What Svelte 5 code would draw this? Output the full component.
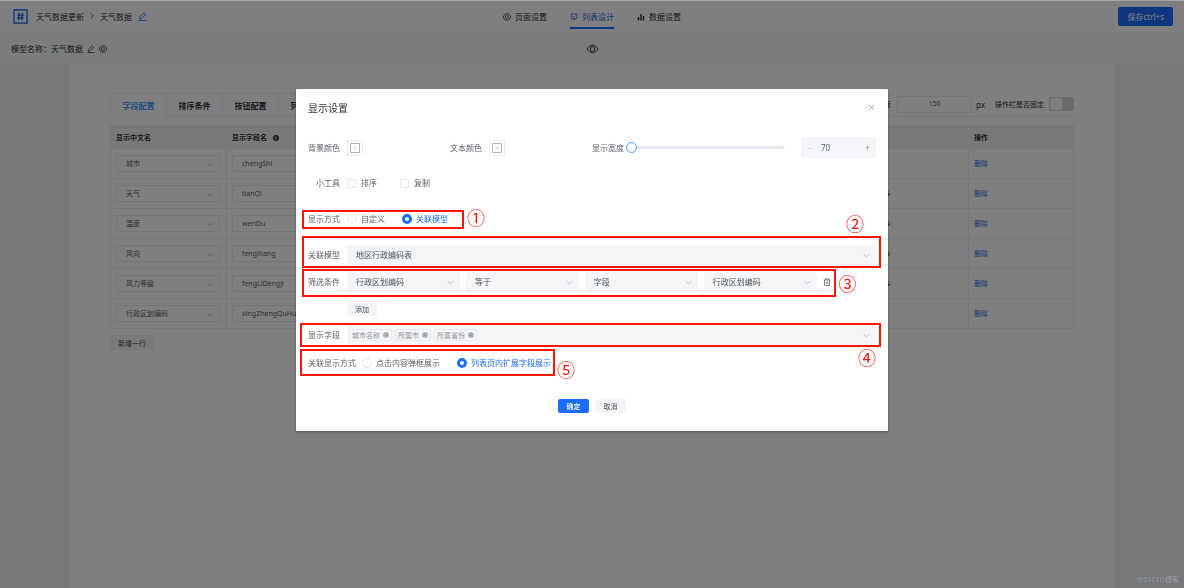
<script>
  const fields = [
    ['城市', 'chengShi'],
    ['天气', 'tianQi'],
    ['温度', 'wenDu'],
    ['风向', 'fengXiang'],
    ['风力等级', 'fengLiDengJi'],
    ['行政区划编码', 'xingZhengQuHuaBianMa']
  ];
  const tabs = ['字段配置', '排序条件', '按钮配置', '列表配置'];
  const filters = ['行政区划编码', '等于', '字段', '行政区划编码'];

  let tags = $state(['城市名称', '所属市', '所属省份']);
  let activeTab = $state('字段配置');
  let mode = $state('model');
  let expand = $state('list');
  let width = $state(70);
</script>

{#snippet gear()}
  <svg class="icon" viewBox="0 0 16 16" aria-hidden="true">
    <path d="M5 1.5h6l1 1.8 2 1.2L15.2 8 14 11.500l-2 1.200-1 1.800H5l-1-1.800-2-1.200L.8 8 2 4.500l2-1.200z" />
    <circle cx="8" cy="8" r="3" />
  </svg>
{/snippet}

{#snippet pencil()}
  <svg class="icon" viewBox="0 0 16 16" aria-hidden="true">
    <path d="M2.500 12.500 3 9l7.500-7.500 3 3L6 12zM1 15h14" />
  </svg>
{/snippet}

{#snippet chevron()}
  <svg class="chevron" viewBox="0 0 10 10" aria-hidden="true"><path d="M1 3l4 4 4-4" /></svg>
{/snippet}

<div class="page">
  <header>
    <div class="crumbs">
      <svg class="logo" viewBox="0 0 16 16" aria-hidden="true">
        <rect x="1" y="1" width="14" height="14" />
        <path d="M6.800 4 5.800 12M10.200 4 9.200 12M4.500 6.500h7.500M4 9.500h7.500" />
      </svg>
      <span>天气数据更新</span>
      <svg class="sep" viewBox="0 0 6 10" aria-hidden="true"><path d="M1 1l4 4-4 4" /></svg>
      <span>天气数据</span>
      <button class="plain blue" aria-label="编辑">{@render pencil()}</button>
    </div>
    <nav>
      <a href="#page">{@render gear()}页面设置</a>
      <a href="#list" class="on">
        <svg class="icon" viewBox="0 0 16 16" aria-hidden="true"><path d="M1 2h14M2.500 2v9.500h11V2M5 6l2.500 2.500L11 5M5 14.500l3-3 3 3" /></svg>列表设计
      </a>
      <a href="#data">
        <svg class="icon bars" viewBox="0 0 16 16" aria-hidden="true"><path d="M3 8v7M8 2v13M13 6v9" /></svg>数据设置
      </a>
    </nav>
    <div class="actions"><button class="save">保存ctrl+s</button></div>
  </header>

  <div class="subbar">
    <div class="model">
      <span>模型名称：天气数据</span>
      <button class="plain" aria-label="编辑模型">{@render pencil()}</button>
      <button class="plain" aria-label="模型设置">{@render gear()}</button>
    </div>
    <button class="plain" aria-label="预览">
      <svg class="eye" viewBox="0 0 24 18" aria-hidden="true">
        <path d="M1.500 9Q12-5.500 22.500 9 12 23.500 1.500 9z" /><circle cx="12" cy="9" r="4.200" />
      </svg>
    </button>
    <div></div>
  </div>

  <main>
    <div class="tabbar">
      {#each tabs as t}
        <button class="tab" class:active={t === activeTab} onclick={() => (activeTab = t)}>{t}</button>
      {/each}
      <div class="tools">
        <label for="opw">操作栏宽度</label>
        <input id="opw" class="box" value="150" />
        <span class="px">px</span>
        <label for="fix">操作栏是否固定</label>
        <input id="fix" class="switch" type="checkbox" />
      </div>
    </div>
    <table>
      <thead>
        <tr>
          <th class="c1">显示中文名</th>
          <th class="c1">显示字段名 <span class="info">i</span></th>
          <th>排序</th>
          <th class="c4">操作</th>
        </tr>
      </thead>
      <tbody>
        {#each fields as [name, key], i}
          <tr>
            <td>
              <div class="pick">
                <select class="box" aria-label="显示中文名"><option>{name}</option></select>
                {@render chevron()}
              </div>
            </td>
            <td><input class="box" value={key} aria-label="显示字段名" /></td>
            <td class="sort">
              {#if i > 0 && i < fields.length - 1}
                <svg viewBox="0 0 10 10" aria-label="下移"><path d="M5 1v8M1 5l4 4 4-4" /></svg>
              {/if}
            </td>
            <td><a href="#delete">删除</a></td>
          </tr>
        {/each}
      </tbody>
    </table>
    <button class="grey newrow">新增一行</button>
  </main>
</div>

<div class="mask">
  <div class="dialog" role="dialog" aria-labelledby="dlg-title">
    <div class="head">
      <h2 id="dlg-title">显示设置</h2>
      <button class="plain" aria-label="关闭">
        <svg class="close" viewBox="0 0 10 10" aria-hidden="true"><path d="M1 1l8 8M9 1l-8 8" /></svg>
      </button>
    </div>

    <div class="row thirds">
      {#each ['背景颜色', '文本颜色'] as c}
        <div class="cell">
          <span class="label">{c}</span>
          <button class="swatch" aria-label={c}>
            <span><svg viewBox="0 0 10 10" aria-hidden="true"><path d="M1 1l8 8M9 1l-8 8" /></svg></span>
          </button>
        </div>
      {/each}
      <div class="cell">
        <label class="label near" for="wd">显示宽度</label>
        <input id="wd" type="range" min="70" max="1000" bind:value={width} />
        <div class="stepper">
          <button aria-label="减少" disabled={width <= 70} onclick={() => (width -= 1)}>−</button>
          <input aria-label="宽度值" bind:value={width} />
          <button aria-label="增加" onclick={() => (width += 1)}>+</button>
        </div>
      </div>
    </div>

    <div class="row r-tools">
      <span class="label">小工具</span>
      <label class="opt wide"><input type="checkbox" /><span>排序</span></label>
      <label class="opt"><input type="checkbox" /><span>复制</span></label>
    </div>

    <div class="row r-mode fit">
      <span class="label">显示方式</span>
      <label class="opt"><input type="radio" value="custom" bind:group={mode} /><span>自定义</span></label>
      <label class="opt"><input type="radio" value="model" bind:group={mode} /><span>关联模型</span></label>
      <span class="frame f1"></span><span class="num n1">①</span>
    </div>

    <div class="row r-model">
      <label class="label" for="rel">关联模型</label>
      <div class="pick fill">
        <select id="rel"><option>地区行政编码表</option></select>
        {@render chevron()}
      </div>
      <span class="frame f2"></span><span class="num n2">②</span>
    </div>

    <div class="row r-filter">
      <span class="label">筛选条件</span>
      <div class="conds">
        {#each filters as f}
          <div class="pick fill">
            <select aria-label="筛选条件"><option>{f}</option></select>
            {@render chevron()}
          </div>
        {/each}
        <button class="plain" aria-label="删除条件">
          <svg class="trash" viewBox="0 0 16 16" aria-hidden="true"><path d="M1 4h14M5 4V1.500h6V4M3 4v11h10V4M6.500 7v5M9.500 7v5" /></svg>
        </button>
      </div>
      <span class="frame f3"></span><span class="num n3">③</span>
    </div>

    <div class="add"><button class="grey">添加</button></div>

    <div class="row r-fields">
      <span class="label">显示字段</span>
      <div class="tags">
        {#each tags as t}
          <span class="tag">{t}<button aria-label="移除{t}" onclick={() => (tags = tags.filter((x) => x !== t))}>
            <svg viewBox="0 0 10 10" aria-hidden="true"><circle cx="5" cy="5" r="5" /><path d="M3 3l4 4M7 3l-4 4" /></svg>
          </button></span>
        {/each}
        {@render chevron()}
      </div>
      <span class="frame f4"></span><span class="num n4">④</span>
    </div>

    <div class="row r-expand fit">
      <span class="label auto">关联显示方式</span>
      <label class="opt"><input type="radio" value="popup" bind:group={expand} /><span>点击内容弹框展示</span></label>
      <label class="opt"><input type="radio" value="list" bind:group={expand} /><span>列表页内扩展字段展示</span></label>
      <span class="frame f5"></span><span class="num n5">⑤</span>
    </div>

    <div class="foot">
      <button class="primary">确定</button>
      <button class="grey">取消</button>
    </div>
  </div>
</div>

<div class="watermark">@51CTO博客</div>

<style>
  :global(body) {
    font-family: 'Noto Sans', 'Noto Sans CJK SC', sans-serif;
    font-size: 8px;
    color: #303133;
    background: #edf0f5;
  }
  *, *::before { box-sizing: border-box; }
  button, input, select { font: inherit; color: inherit; margin: 0; }
  button { border: 0; padding: 0; cursor: pointer; }
  a { color: inherit; text-decoration: none; }
  svg { display: block; fill: none; stroke: currentColor; flex: none; }
  .plain { background: none; display: flex; align-items: center; }
  .blue { color: #1a6dff; }
  .icon { width: 8px; height: 8px; stroke-width: 1.5; }

  .page { min-height: 100vh; display: flex; flex-direction: column; }
  header, .subbar {
    display: grid;
    grid-template-columns: 1fr auto 1fr;
    align-items: center;
  }
  header { height: 33px; background: #fff; padding: 0 11px; }
  .crumbs { display: flex; align-items: center; gap: 6px; padding: 0 0 1px 2px; }
  .crumbs .icon { width: 9px; height: 9px; }
  .logo { width: 15px; height: 15px; color: #1a6dff; stroke-width: 1.5; margin-right: 2px; }
  .sep { width: 4px; height: 8px; }
  nav { display: flex; gap: 23px; height: 100%; }
  nav a { display: flex; align-items: center; gap: 4px; position: relative; }
  nav .on { color: #2468e8; }
  nav .on::before {
    content: '';
    position: absolute;
    left: 0;
    right: 0;
    bottom: 4px;
    height: 2px;
    background: #1a6dff;
  }
  .bars { stroke-width: 3; }
  .actions { text-align: right; }
  .save { background: #1a6dff; color: #fff; height: 19px; padding: 0 9px; border-radius: 2px; }
  .subbar { height: 32px; background: #f4faf8; padding: 0 11px; }
  .model { display: flex; align-items: center; gap: 4px; padding-bottom: 1px; }
  .eye { width: 13px; height: 10px; stroke-width: 1.8; }

  main { flex: 1; background: #fff; margin: 0 69px; padding: 28px 41px; }
  .tabbar { display: flex; height: 24px; border-bottom: 1px solid #eef0f2; border-left: 1px solid #eef0f2; }
  .tab {
    width: 56px;
    height: 24px;
    background: none;
    border: solid #eef0f2;
    border-width: 1px 1px 1px 0;
    font-weight: 700;
  }
  .tab.active { color: #409eff; border-bottom-color: #fff; }
  .tools { margin-left: auto; display: flex; align-items: center; font-size: 7px; height: 22px; }
  .box {
    width: 100%;
    height: 17px;
    border: 1px solid #e8ebef;
    border-radius: 2px;
    background: #fff;
    padding: 0 9px 1px;
    color: #606266;
    font-size: 7px;
    outline: 0;
    appearance: none;
  }
  .tools .box { width: 75px; margin: 0 4px 0 6px; text-align: center; }
  .px { margin-right: 10px; font-size: 8px; }
  .switch {
    appearance: none;
    width: 25px;
    height: 14px;
    margin-left: 5px;
    border-radius: 3px;
    background: #d4d7dc;
    padding: 1px;
  }
  .switch::before { content: ''; display: block; width: 12px; height: 12px; border-radius: 3px; background: #fff; }

  table { width: 100%; margin-top: 8px; table-layout: fixed; border-spacing: 0; font-size: 7px; border: solid #eef2f0; border-width: 0 1px 0 1px; }
  th { height: 24px; padding: 0 5px; text-align: left; background: #f0f5f3; }
  td { height: 30px; padding: 0 6px 0 5px; border: solid #eff2f1; border-width: 0 1px 1px 0; }
  td:last-child { border-right: 0; padding-bottom: 2px; }
  td:nth-child(2) .box { width: 104px; }
  td a { color: #2b66e8; }
  .c1 { width: 116px; }
  .c4 { width: 104px; }
  .sort svg { width: 6px; height: 7px; margin-left: auto; margin-right: 71px; stroke-width: 1.5; }
  .info {
    display: inline-block;
    width: 6px;
    height: 6px;
    margin-left: 4px;
    border-radius: 50%;
    background: #303133;
    color: #fff;
    font-size: 5px;
    line-height: 6px;
    text-align: center;
  }
  .pick { position: relative; }
  .chevron { position: absolute; right: 6px; top: 50%; width: 7px; height: 7px; margin-top: -3px; color: #b4b8bf; stroke-width: 1.2; pointer-events: none; }
  .grey { background: #f4f5f7; border-radius: 2px; font-size: 7px; height: 14px; padding: 0 8px; color: #4b4f57; }
  .newrow { margin-top: 6px; height: 15px; background: #f1f5f5; }

  .mask { position: fixed; inset: 0; background: rgba(0, 0, 0, 0.5); border-top: 1px solid rgba(0, 0, 0, 0.35); background-clip: padding-box; }
  .dialog {
    width: 50%;
    margin: 15vh auto 0;
    padding: 0 12px 18px;
    background: #fff;
    border-radius: 1px;
    color: #5a5e68;
    box-shadow: 0 1px 3px rgba(0, 0, 0, 0.3);
  }
  .head { display: flex; align-items: center; justify-content: space-between; height: 36px; margin-bottom: 12px; }
  h2 { margin: 0; font-size: 10px; font-weight: 400; color: #303133; }
  .close { width: 7px; height: 7px; color: #909399; margin-right: 1px; }
  .row { position: relative; display: flex; align-items: center; height: 20px; }
  .fit { width: fit-content; }
  .thirds { display: grid; grid-template-columns: 1fr 1fr 2fr; }
  .cell { display: flex; align-items: center; }
  .label { flex: none; width: 39px; padding-right: 7px; text-align: right; white-space: nowrap; }
  .label.auto { width: auto; padding-right: 6px; }
  .label.near { width: 34px; padding-right: 2px; }
  .swatch { width: 16px; height: 16px; padding: 2px; border: 1px solid #e8eaee; border-radius: 2px; background: #fff; }
  .swatch span { display: grid; place-items: center; height: 10px; border: 1px solid #b0b0b0; border-radius: 1px; }
  .swatch svg { width: 4px; height: 4px; color: #999; }

  input[type='range'] { appearance: none; flex: 1; min-width: 0; height: 12px; margin-right: 17px; background: none; }
  input[type='range']::-webkit-slider-runnable-track { height: 3px; border-radius: 2px; background: #e4e7ed; }
  input[type='range']::-webkit-slider-thumb {
    appearance: none;
    width: 11px;
    height: 11px;
    margin-top: -4px;
    border: 1px solid #409eff;
    border-radius: 50%;
    background: #fff;
  }
  .stepper { display: flex; width: 75px; height: 21px; border-radius: 2px; background: #f4f5f8; }
  .stepper button { width: 17px; background: none; color: #82868e; }
  .stepper button:disabled { color: #c0c4cc; }
  .stepper input { flex: 1; min-width: 0; border: 0; padding: 0 3px; background: none; }

  .opt { display: flex; align-items: center; margin-right: 17px; white-space: nowrap; }
  .opt span { padding-bottom: 2px; }
  .opt:has(+ .frame) { margin-right: 0; }
  .opt.wide { margin-right: 23px; }
  .opt input { appearance: none; width: 9px; height: 9px; margin-right: 5px; border: 1px solid #e2e5ea; background: #fff; }
  .opt input[type='checkbox'] { border-radius: 1px; }
  .opt input[type='radio'] { width: 10px; height: 10px; margin-right: 4px; border-radius: 50%; }
  .opt input[type='radio']:checked { border: 3px solid #1a6dff; }
  .opt input:checked + span { color: #1a6dff; }

  .r-tools { margin-top: 16px; }
  .r-mode { margin-top: 16px; }
  .r-model { margin-top: 16px; }
  .r-filter { margin-top: 7px; width: 92%; }
  .r-fields { margin-top: 9px; }
  .r-expand { margin-top: 8px; }
  .fill { flex: 1; min-width: 0; }
  .fill select {
    appearance: none;
    display: block;
    width: 100%;
    height: 20px;
    border: 0;
    border-radius: 2px;
    padding: 0 9px 1px;
    background: #f4f5f7;
    color: #4f535c;
    outline: 0;
  }
  .row > .label { padding-bottom: 1px; }
  .conds { flex: 1; display: flex; gap: 6px; }
  .trash { width: 8px; height: 8px; stroke-width: 1.5; }
  .add { margin: 10px 0 0 39px; display: flex; }
  .tags { position: relative; flex: 1; display: flex; align-items: center; gap: 3px; height: 19px; padding: 0 2px; border-radius: 2px; background: #f4f5f7; }
  .tag { display: flex; align-items: center; gap: 3px; height: 12px; padding: 0 2px; border: 1px solid #eaebee; border-radius: 2px; font-size: 7px; color: #909399; }
  .tag svg { width: 6px; height: 6px; }
  .tag button { background: none; }
  .tag circle { fill: #b0b4bb; stroke: none; }
  .foot { display: flex; justify-content: center; gap: 6px; margin-top: 26px; }
  .primary { background: #1a6dff; color: #fff; border-radius: 2px; font-size: 7px; font-weight: 500; height: 14px; padding: 0 8px; }
  .foot button { width: 31px; }

  .frame { position: absolute; border: 2px solid #fb1607; pointer-events: none; }
  .num { position: absolute; font-size: 18px; line-height: 18px; width: 18px; color: #fb1607; }
  .f1 { inset: 1px -16px 0 -6px; }
  .n1 { right: -37px; top: 0; }
  .f2 { inset: -9px -5px -3px -6px; }
  .n2 { right: 12px; top: -30px; }
  .f3 { inset: -3px -5px -5px -6px; }
  .n3 { right: -26px; top: 3px; }
  .f4 { inset: -2px -5px -2px -8px; }
  .n4 { right: 0; top: 24px; }
  .f5 { inset: -4px -4px -3px -8px; }
  .n5 { right: -24px; top: 8px; }

  .watermark { position: fixed; right: 5px; bottom: 4px; font-size: 7px; color: #9a9c9f; }
</style>
